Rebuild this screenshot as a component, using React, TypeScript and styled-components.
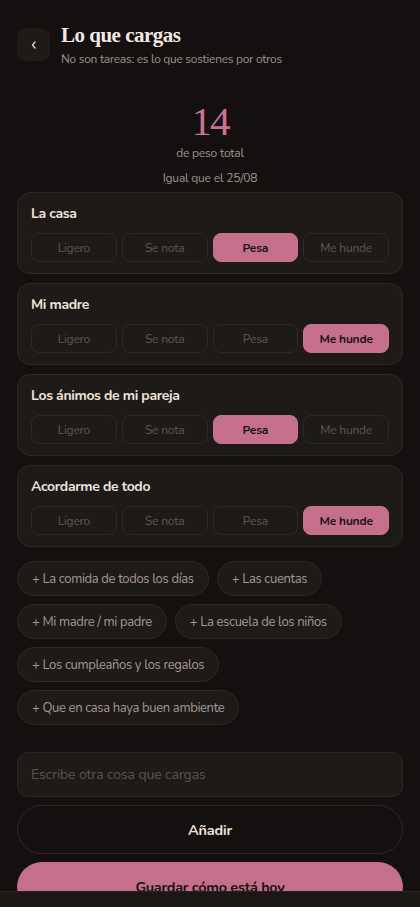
import React from "react";
import styled, { createGlobalStyle } from "styled-components";

const Global = createGlobalStyle`
  html, body { margin: 0; padding: 0; background: #141010; }
  body { font-family: "Nunito", "Lato", "Noto Sans", sans-serif; color: #ece4dc; }
  * { box-sizing: border-box; }
`;

const Page = styled.div`
  width: 420px;
  min-height: 907px;
  padding: 28px 17px 40px;
  display: flex;
  flex-direction: column;
`;

const Header = styled.div`
  display: flex;
  gap: 11px;
  align-items: flex-start;
`;

const BackButton = styled.button`
  width: 33px;
  height: 33px;
  border-radius: 9px;
  border: none;
  background: #1e1a18;
  color: #d8d0c8;
  display: flex;
  align-items: center;
  justify-content: center;
  padding: 0;
  flex-shrink: 0;
`;

const TitleBlock = styled.div`
  display: flex;
  flex-direction: column;
  margin-top: -8px;
`;

const Title = styled.h1`
  margin: 0;
  font-family: "Liberation Serif", "DejaVu Serif", serif;
  font-weight: 700;
  font-size: 21px;
  letter-spacing: -0.5px;
  line-height: 30px;
  color: #f2eae2;
`;

const Subtitle = styled.div`
  font-size: 12px;
  letter-spacing: -0.3px;
  line-height: 18px;
  color: #9c928b;
`;

const Summary = styled.div`
  display: flex;
  flex-direction: column;
  align-items: center;
  margin-top: 31px;
`;

const Total = styled.div`
  font-family: "Liberation Serif", "DejaVu Serif", serif;
  font-size: 41px;
  letter-spacing: -2px;
  line-height: 44px;
  color: #c9728f;
`;

const SummaryText = styled.div<{ $gap?: number }>`
  font-size: 12px;
  letter-spacing: -0.2px;
  line-height: 18px;
  color: #a0958e;
  margin-top: ${(p) => p.$gap ?? 0}px;
`;

const Cards = styled.div`
  display: flex;
  flex-direction: column;
  gap: 9px;
  margin-top: 5px;
`;

const Card = styled.div`
  background: #1e1a18;
  border: 1px solid #2e2724;
  border-radius: 13px;
  padding: 11px 13px 11px;
`;

const CardLabel = styled.div`
  font-size: 14px;
  letter-spacing: -0.35px;
  font-weight: 700;
  line-height: 20px;
  color: #ece4dc;
`;

const Levels = styled.div`
  display: grid;
  grid-template-columns: repeat(4, 1fr);
  gap: 5px;
  margin-top: 9px;
`;

const Level = styled.button<{ $active: boolean }>`
  height: 29px;
  border-radius: 8px;
  border: 1px solid ${(p) => (p.$active ? "#c9728f" : "#2f2825")};
  background: ${(p) => (p.$active ? "#c4708c" : "transparent")};
  color: ${(p) => (p.$active ? "#1a1311" : "#5f5650")};
  font-family: inherit;
  font-size: 12px;
  letter-spacing: -0.2px;
  font-weight: ${(p) => (p.$active ? 700 : 400)};
  padding: 0;
`;

const Chips = styled.div`
  display: flex;
  flex-wrap: wrap;
  gap: 8px;
  margin-top: 14px;
`;

const Chip = styled.button`
  height: 35px;
  border-radius: 18px;
  border: 1px solid #2e2724;
  background: #1e1a18;
  color: #a39891;
  font-family: inherit;
  font-size: 13px;
  letter-spacing: -0.35px;
  padding: 0 14px;
`;

const Input = styled.input`
  margin-top: 27px;
  height: 45px;
  width: 100%;
  border-radius: 11px;
  border: 1px solid #2e2724;
  background: #1e1a18;
  color: #ece4dc;
  font-family: inherit;
  font-size: 14px;
  letter-spacing: -0.1px;
  padding: 0 13px;
  outline: none;
  &::placeholder { color: #5c534d; }
`;

const AddButton = styled.button`
  margin-top: 8px;
  height: 49px;
  width: 100%;
  border-radius: 25px;
  border: 1px solid #2e2724;
  background: transparent;
  color: #ece4dc;
  font-family: inherit;
  font-size: 14.5px;
  letter-spacing: -0.2px;
  font-weight: 700;
`;

const SaveButton = styled.button`
  margin-top: 8px;
  height: 50px;
  width: 100%;
  border-radius: 25px;
  border: none;
  background: #c4708c;
  color: #1a1311;
  font-family: inherit;
  font-size: 14.5px;
  letter-spacing: -0.3px;
  font-weight: 700;
`;

const BottomBar = styled.div`
  position: fixed;
  left: 0;
  right: 0;
  bottom: 0;
  height: 16px;
  background: #1b1715;
  border-top: 1px solid #2a2320;
`;

const items: { name: string; level: number }[] = [
  { name: "La casa", level: 2 },
  { name: "Mi madre", level: 3 },
  { name: "Los ánimos de mi pareja", level: 2 },
  { name: "Acordarme de todo", level: 3 },
];

const levels = ["Ligero", "Se nota", "Pesa", "Me hunde"];

const suggestions = [
  "La comida de todos los días",
  "Las cuentas",
  "Mi madre / mi padre",
  "La escuela de los niños",
  "Los cumpleaños y los regalos",
  "Que en casa haya buen ambiente",
];

export default function App() {
  return (
    <>
      <Global />
      <Page>
        <Header>
          <BackButton aria-label="Volver">
            <svg width="10" height="10" viewBox="0 0 10 10">
              <path d="M6 2 L3.5 5 L6 8" stroke="#d8d0c8" strokeWidth="1.4" fill="none" strokeLinecap="round" strokeLinejoin="round" />
            </svg>
          </BackButton>
          <TitleBlock>
            <Title>Lo que cargas</Title>
            <Subtitle>No son tareas: es lo que sostienes por otros</Subtitle>
          </TitleBlock>
        </Header>
        <Summary>
          <Total>14</Total>
          <SummaryText $gap={1}>de peso total</SummaryText>
          <SummaryText $gap={7}>Igual que el 25/08</SummaryText>
        </Summary>
        <Cards>
          {items.map((it) => (
            <Card key={it.name}>
              <CardLabel>{it.name}</CardLabel>
              <Levels>
                {levels.map((l, i) => (
                  <Level key={l} $active={i === it.level}>
                    {l}
                  </Level>
                ))}
              </Levels>
            </Card>
          ))}
        </Cards>
        <Chips>
          {suggestions.map((s) => (
            <Chip key={s}>+ {s}</Chip>
          ))}
        </Chips>
        <Input placeholder="Escribe otra cosa que cargas" />
        <AddButton>Añadir</AddButton>
        <SaveButton>Guardar cómo está hoy</SaveButton>
      </Page>
      <BottomBar />
    </>
  );
}
